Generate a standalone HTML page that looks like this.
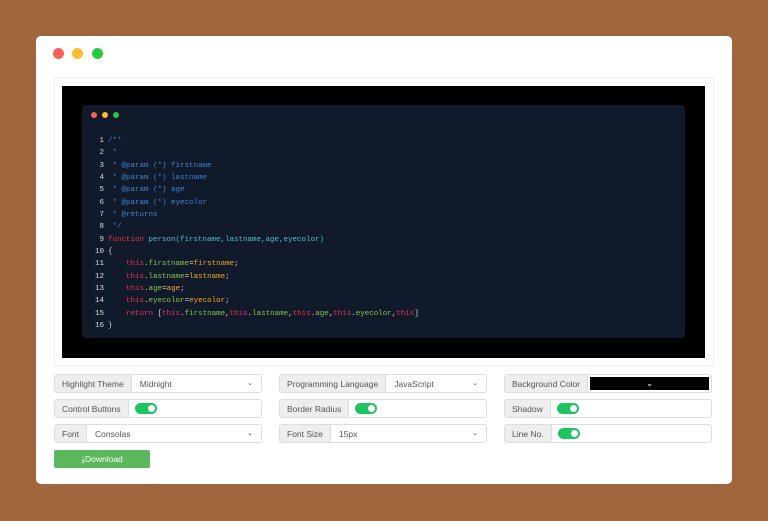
<!DOCTYPE html>
<html><head><style>
*{margin:0;padding:0;box-sizing:border-box}
body{width:768px;height:521px;background:#a2663f;font-family:"Liberation Sans",sans-serif;position:relative;overflow:hidden}
.card{position:absolute;left:36px;top:36px;width:696px;height:448px;background:#fff;border-radius:5px}
.dot{position:absolute;width:11px;height:11px;border-radius:50%;top:12px}
.box{position:absolute;left:18px;top:41px;width:660px;height:289px;border:1px solid #eee}
.black{position:absolute;left:26px;top:50px;width:643px;height:272px;background:#000}
.code{position:absolute;left:46px;top:69px;width:603px;height:233px;background:#111a2b;border-radius:4px}
.sd{position:absolute;top:7px;width:6px;height:6px;border-radius:50%}
pre{position:absolute;left:0;top:30px;font-family:"Liberation Mono",monospace;font-size:7.5px;line-height:12.33px;color:#d4d4d4}
.n{display:inline-block;width:22px;text-align:right;margin-right:4px;color:#ddd}
.c{color:#3d84d4}.k{color:#e8334e}.t{color:#4cc3c9}.g{color:#8bc34a}.o{color:#f5a623}
.row{position:absolute;height:19px;border:1px solid #ddd;border-radius:3px;font-size:8.5px;color:#555;display:flex;align-items:center}
.lab{background:#eee;height:100%;display:flex;align-items:center;padding:0 7px;border-right:1px solid #ddd}
.val{padding-left:8px;flex:1;position:relative;height:100%;display:flex;align-items:center}
.arr{position:absolute;right:8px;top:4px;font-size:7px}
.tg{width:22px;height:11px;background:#1dc462;border-radius:6px;position:relative;margin-left:6px}
.tg:after{content:"";position:absolute;right:2px;top:2px;width:7px;height:7px;border-radius:50%;background:#fff}
.btn{position:absolute;left:18px;top:414px;width:96px;height:18px;background:#5cb85c;border-radius:2px;color:#fff;font-size:8.5px;display:flex;align-items:center;justify-content:center}
</style></head><body>
<div class="card">
<div class="dot" style="left:17px;background:#fe5f57"></div>
<div class="dot" style="left:36px;background:#febc2e"></div>
<div class="dot" style="left:56px;background:#28c840"></div>
<div class="box"></div>
<div class="black"></div>
<div class="code">
<div class="sd" style="left:9px;background:#fe5f57"></div>
<div class="sd" style="left:20px;background:#febc2e"></div>
<div class="sd" style="left:31px;background:#28c840"></div>
<pre><span class="n">1</span><span class="c">/**</span>
<span class="n">2</span><span class="c"> *</span>
<span class="n">3</span><span class="c"> * @param (*) firstname</span>
<span class="n">4</span><span class="c"> * @param (*) lastname</span>
<span class="n">5</span><span class="c"> * @param (*) age</span>
<span class="n">6</span><span class="c"> * @param (*) eyecolor</span>
<span class="n">7</span><span class="c"> * @returns</span>
<span class="n">8</span><span class="c"> */</span>
<span class="n">9</span><span class="k">function</span> <span class="t">person(firstname,lastname,age,eyecolor)</span>
<span class="n">10</span>{
<span class="n">11</span>    <span class="k">this</span>.<span class="g">firstname</span>=<span class="o">firstname</span>;
<span class="n">12</span>    <span class="k">this</span>.<span class="g">lastname</span>=<span class="o">lastname</span>;
<span class="n">13</span>    <span class="k">this</span>.<span class="g">age</span>=<span class="o">age</span>;
<span class="n">14</span>    <span class="k">this</span>.<span class="g">eyecolor</span>=<span class="o">eyecolor</span>;
<span class="n">15</span>    <span class="k">return</span> [<span class="k">this</span>.<span class="g">firstname</span>,<span class="k">this</span>.<span class="g">lastname</span>,<span class="k">this</span>.<span class="g">age</span>,<span class="k">this</span>.<span class="g">eyecolor</span>,<span class="k">this</span>]
<span class="n">16</span>}</pre>
</div>
<div class="row" style="left:18px;top:338px;width:208px"><div class="lab">Highlight Theme</div><div class="val">Midnight<span class="arr">⌄</span></div></div>
<div class="row" style="left:243px;top:338px;width:208px"><div class="lab">Programming Language</div><div class="val">JavaScript<span class="arr">⌄</span></div></div>
<div class="row" style="left:468px;top:338px;width:208px"><div class="lab">Background Color</div><div class="val" style="padding:0;margin:2px;background:#000;height:13px;color:#fff;justify-content:center">⌄</div></div>
<div class="row" style="left:18px;top:363px;width:208px"><div class="lab">Control Buttons</div><div class="tg"></div></div>
<div class="row" style="left:243px;top:363px;width:208px"><div class="lab">Border Radius</div><div class="tg"></div></div>
<div class="row" style="left:468px;top:363px;width:208px"><div class="lab">Shadow</div><div class="tg"></div></div>
<div class="row" style="left:18px;top:388px;width:208px"><div class="lab">Font</div><div class="val">Consolas<span class="arr">⌄</span></div></div>
<div class="row" style="left:243px;top:388px;width:208px"><div class="lab">Font Size</div><div class="val">15px<span class="arr">⌄</span></div></div>
<div class="row" style="left:468px;top:388px;width:208px"><div class="lab">Line No.</div><div class="tg"></div></div>
<div class="btn">⤓Download</div>
</div>
</body></html>
